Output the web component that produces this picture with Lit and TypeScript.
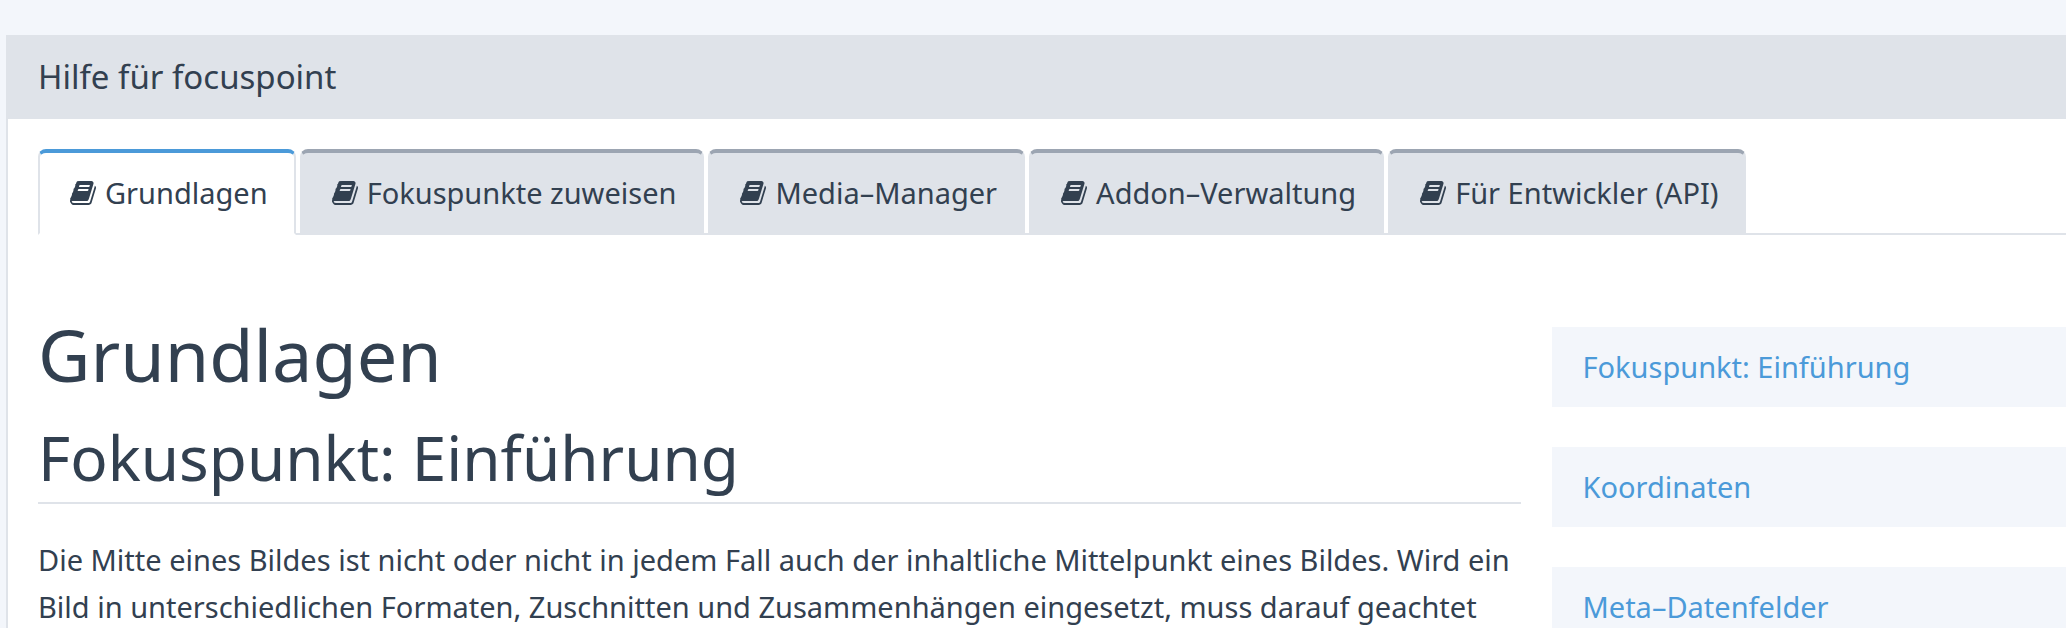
import { LitElement, html, css, svg } from "lit";
import { customElement, property } from "lit/decorators.js";

const bookIcon = svg`<path d="M1639 478q40 57 18 129l-275 906q-19 64-76.5 107.5t-122.5 43.5h-923q-77 0-148.5-53.5t-99.5-131.5q-24-67-2-127 0-4 3-27t4-37q1-8-3-21.5t-3-19.5q2-11 8-21t16.5-23.5 16.5-23.5q23-38 45-91.5t30-91.5q3-10 .5-30t-.5-28q3-11 17-28t17-23q21-36 42-92t25-90q1-9-2.5-32t.5-28q4-13 22-30.5t22-22.5q19-26 42.5-84.5t27.5-96.5q1-8-3-25.5t-2-26.5q2-8 9-18t18-23 17-21q8-12 16.5-30.5t15-35 16-36 19.5-32 26.5-23.5 36-11.5 47.5 5.5l-1 3q38-9 51-9h761q74 0 114 56t18 130l-274 906q-36 119-71.5 153.5t-128.5 34.5h-869q-27 0-38 15-11 16-1 43 24 70 144 70h923q29 0 56-15.5t35-41.5l300-987q7-22 5-57 38 15 59 43zm-1064 2q-4 13 2 22.5t20 9.5h608q13 0 25.5-9.5t16.5-22.5l21-64q4-13-2-22.5t-20-9.5h-608q-13 0-25.5 9.5t-16.5 22.5zm-83 256q-4 13 2 22.5t20 9.5h608q13 0 25.5-9.5t16.5-22.5l21-64q4-13-2-22.5t-20-9.5h-608q-13 0-25.5 9.5t-16.5 22.5z"/>`;

@customElement("help-tabs")
export class HelpTabs extends LitElement {
  @property({ attribute: false }) tabs: string[] = [];
  @property({ type: Number }) active = 0;

  static styles = css`
    :host {
      display: block;
    }
    .tabs {
      display: flex;
      gap: 4px;
      margin: 0;
      padding: 0;
      list-style: none;
      border-bottom: 2px solid #dfe3e9;
    }
    .tab {
      display: flex;
      align-items: center;
      gap: 9px;
      height: 80px;
      margin-bottom: -2px;
      padding: 0 26px 0 30px;
      border: 2px solid #dfe3e9;
      border-top: 4px solid #9ca5b2;
      border-radius: 8px 8px 0 0;
      background: #dfe3e9;
      color: #324050;
      line-height: 40px;
      text-decoration: none;
      white-space: nowrap;
    }
    .tab.active {
      border-top-color: #4b9ad9;
      border-bottom-color: #fff;
      background: #fff;
    }
    .icon {
      flex: none;
      width: 26px;
      height: 28px;
      fill: currentColor;
    }
  `;

  render() {
    return html`
      <ul class="tabs">
        ${this.tabs.map(
          (label, i) => html`<li>
            <a class="tab ${i === this.active ? "active" : ""}" href="#tab-${i}">
              <svg class="icon" viewBox="0 0 1664 1792" aria-hidden="true">${bookIcon}</svg>
              <span>${label}</span>
            </a>
          </li>`
        )}
      </ul>
    `;
  }
}

@customElement("app-root")
export class AppRoot extends LitElement {
  private tabs = [
    "Grundlagen",
    "Fokuspunkte zuweisen",
    "Media–Manager",
    "Addon–Verwaltung",
    "Für Entwickler (API)",
  ];
  private chapters = ["Fokuspunkt: Einführung", "Koordinaten", "Meta–Datenfelder"];

  static styles = css`
    :host {
      display: flex;
      flex-direction: column;
      box-sizing: border-box;
      height: 100vh;
      overflow: hidden;
      padding: 35px 0 0 6px;
      background: #f3f6fb;
      color: #324050;
      font-family: "Noto Sans", "Open Sans", sans-serif;
      font-size: 29px;
      line-height: 47px;
    }
    .panel {
      flex: 1 0 auto;
      border-left: 2px solid #dfe3e9;
      background: #fff;
    }
    .title {
      padding: 20px 30px;
      background: #dfe3e9;
      font-size: 33px;
      line-height: 44px;
    }
    .body {
      padding: 30px 0 0 30px;
    }
    .columns {
      display: grid;
      grid-template-columns: minmax(0, 26fr) minmax(0, 9fr);
      gap: 31px;
      padding-top: 72px;
    }
    h1,
    h2,
    p {
      margin: 0;
      font-weight: 400;
    }
    h1 {
      font-size: 72px;
      line-height: 94px;
    }
    h2 {
      padding: 18px 0 7px;
      border-bottom: 2px solid #dfe3e9;
      font-size: 62px;
      line-height: 76px;
    }
    p {
      padding-top: 32px;
    }
    .chapters {
      display: flex;
      flex-direction: column;
      gap: 40px;
      padding-top: 20px;
    }
    .chapter {
      padding: 20px 30px;
      background: #f3f6fb;
      color: #4b9ad9;
      line-height: 40px;
      text-decoration: none;
    }
  `;

  render() {
    return html`
      <section class="panel">
        <header class="title">Hilfe für focuspoint</header>
        <div class="body">
          <help-tabs .tabs=${this.tabs}></help-tabs>
          <div class="columns">
            <article>
              <h1>Grundlagen</h1>
              <h2>Fokuspunkt: Einführung</h2>
              <p>
                Die Mitte eines Bildes ist nicht oder nicht in jedem Fall auch der inhaltliche
                Mittelpunkt eines Bildes. Wird ein<br />Bild in unterschiedlichen Formaten,
                Zuschnitten und Zusammenhängen eingesetzt, muss darauf geachtet
              </p>
            </article>
            <nav class="chapters">
              ${this.chapters.map(
                (name, i) => html`<a class="chapter" href="#chapter-${i}">${name}</a>`
              )}
            </nav>
          </div>
        </div>
      </section>
    `;
  }
}
